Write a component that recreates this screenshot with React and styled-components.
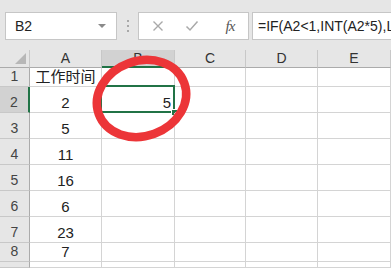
import React from "react";
import styled, { createGlobalStyle } from "styled-components";

const Global = createGlobalStyle`
  html, body { margin: 0; padding: 0; background: #ffffff; }
  body { width: 391px; height: 268px; overflow: hidden; font-family: "Liberation Sans", "Noto Sans CJK SC", sans-serif; }
`;

const Page = styled.div`
  position: relative;
  width: 391px;
  height: 268px;
  overflow: hidden;
  display: flex;
  flex-direction: column;
`;

const Toolbar = styled.div`
  height: 50px;
  flex: none;
  background: #e6e6e6;
  display: flex;
  align-items: flex-start;
  padding: 12px 0 0 5px;
  box-sizing: border-box;
`;

const NameBox = styled.div`
  width: 112px;
  height: 28px;
  box-sizing: border-box;
  background: #fff;
  border: 1px solid #c6c6c6;
  display: flex;
  align-items: center;
  padding: 0 10px 0 9px;
  font-size: 14px;
  color: #222;
`;

const NameText = styled.span`
  flex: 1;
`;

const Caret = styled.span`
  width: 0;
  height: 0;
  border-left: 4px solid transparent;
  border-right: 4px solid transparent;
  border-top: 4px solid #8a8a8a;
`;

const Dots = styled.div`
  width: 21px;
  height: 28px;
  display: flex;
  flex-direction: column;
  align-items: center;
  justify-content: center;
  gap: 3px;
`;

const Dot = styled.span`
  width: 2px;
  height: 2px;
  background: #a8a8a8;
`;

const FxBox = styled.div`
  width: 111px;
  height: 28px;
  box-sizing: border-box;
  background: #fff;
  border: 1px solid #c6c6c6;
  display: flex;
  align-items: center;
  padding: 0 0 0 12px;
`;

const IconSlot = styled.span`
  width: ${(p) => p.$w}px;
  display: flex;
  align-items: center;
  justify-content: center;
`;

const FxText = styled.span`
  font-family: "Liberation Serif", serif;
  font-style: italic;
  font-size: 15px;
  color: #555;
  letter-spacing: -1px;
`;

const FormulaInput = styled.div`
  flex: 1;
  height: 28px;
  margin-left: 3px;
  box-sizing: border-box;
  background: #fff;
  border: 1px solid #c6c6c6;
  border-right: none;
  display: flex;
  align-items: center;
  padding-left: 5px;
  font-size: 14px;
  color: #222;
  white-space: nowrap;
  overflow: hidden;
`;

const Grid = styled.div`
  flex: 1;
  display: grid;
  grid-template-columns: 30px 72px 73px 71px 72px 73px 1fr;
  grid-template-rows: 18px 19px 26px 26px 26px 26px 26px 26px 19px 1fr;
  background: #fff;
`;

const Corner = styled.div`
  background: #e6e6e6;
  border-right: 1px solid #c8c8c8;
  border-bottom: 1px solid #ababab;
  position: relative;
  box-sizing: border-box;
`;

const Triangle = styled.span`
  position: absolute;
  right: 3px;
  bottom: 3px;
  width: 0;
  height: 0;
  border-left: 11px solid transparent;
  border-bottom: 11px solid #b7b7b7;
`;

const ColHead = styled.div`
  box-sizing: border-box;
  background: ${(p) => (p.$sel ? "#d2d2d2" : "#e6e6e6")};
  border-right: 1px solid #c8c8c8;
  border-bottom: ${(p) => (p.$sel ? "2px solid #217346" : "1px solid #ababab")};
  display: flex;
  align-items: flex-end;
  justify-content: center;
  font-size: 14px;
  line-height: 16px;
  color: #333;
  padding-bottom: ${(p) => (p.$sel ? "0" : "1px")};
`;

const RowHead = styled.div`
  box-sizing: border-box;
  background: ${(p) => (p.$sel ? "#d2d2d2" : "#e6e6e6")};
  border-bottom: 1px solid #c8c8c8;
  border-right: ${(p) => (p.$sel ? "2px solid #217346" : "1px solid #ababab")};
  display: flex;
  align-items: flex-end;
  justify-content: center;
  padding-bottom: 2px;
  font-size: 14px;
  line-height: 16px;
  color: #444;
`;

const Cell = styled.div`
  box-sizing: border-box;
  border-right: 1px solid #d4d4d4;
  border-bottom: 1px solid #d4d4d4;
  display: flex;
  align-items: flex-end;
  justify-content: ${(p) => (p.$align === "right" ? "flex-end" : "center")};
  padding: 0 3px 1px 3px;
  font-size: 15px;
  line-height: 17px;
  color: #222;
  white-space: nowrap;
  position: relative;
`;

const SelFrame = styled.span`
  position: absolute;
  left: -2px;
  top: -2px;
  right: -1px;
  bottom: -1px;
  border: 2px solid #217346;
  pointer-events: none;
`;

const Handle = styled.span`
  position: absolute;
  right: -4px;
  bottom: -4px;
  width: 5px;
  height: 5px;
  background: #217346;
  border: 1px solid #fff;
`;

const Ring = styled.svg`
  position: absolute;
  left: 0;
  top: 0;
  pointer-events: none;
`;

const cols = ["A", "B", "C", "D", "E", ""];
const values = ["工作时间", "2", "5", "11", "16", "6", "23", "7", ""];

export default function App() {
  return (
    <>
      <Global />
      <Page>
        <Toolbar>
          <NameBox>
            <NameText>B2</NameText>
            <Caret />
          </NameBox>
          <Dots>
            <Dot />
            <Dot />
            <Dot />
          </Dots>
          <FxBox>
            <IconSlot $w={14}>
              <svg width="12" height="12" viewBox="0 0 12 12">
                <path d="M1.5 1.5 L10.5 10.5 M10.5 1.5 L1.5 10.5" stroke="#a9a9a9" strokeWidth="1.4" fill="none" />
              </svg>
            </IconSlot>
            <IconSlot $w={54}>
              <svg width="14" height="12" viewBox="0 0 14 12">
                <path d="M1.5 6.5 L5 10 L12.5 1.5" stroke="#a9a9a9" strokeWidth="1.5" fill="none" />
              </svg>
            </IconSlot>
            <IconSlot $w={22}>
              <FxText>fx</FxText>
            </IconSlot>
          </FxBox>
          <FormulaInput>=IF(A2&lt;1,INT(A2*5),L</FormulaInput>
        </Toolbar>
        <Grid>
          <Corner>
            <Triangle />
          </Corner>
          {cols.map((c, i) => (
            <ColHead key={c + i} $sel={c === "B"}>
              {c}
            </ColHead>
          ))}
          {values.map((v, r) => (
            <React.Fragment key={r}>
              <RowHead $sel={r === 1}>{r < 8 ? r + 1 : ""}</RowHead>
              <Cell>{v}</Cell>
              {r === 1 ? (
                <Cell $align="right">
                  5
                  <SelFrame />
                  <Handle />
                </Cell>
              ) : (
                <Cell />
              )}
              <Cell />
              <Cell />
              <Cell />
              <Cell />
            </React.Fragment>
          ))}
        </Grid>
        <Ring width="391" height="268" viewBox="0 0 391 268">
          <ellipse
            cx="141.5"
            cy="98.5"
            rx="45.5"
            ry="37.5"
            transform="rotate(-20 141.5 98.5)"
            fill="none"
            stroke="#ec3538"
            strokeWidth="8.5"
          />
        </Ring>
      </Page>
    </>
  );
}
